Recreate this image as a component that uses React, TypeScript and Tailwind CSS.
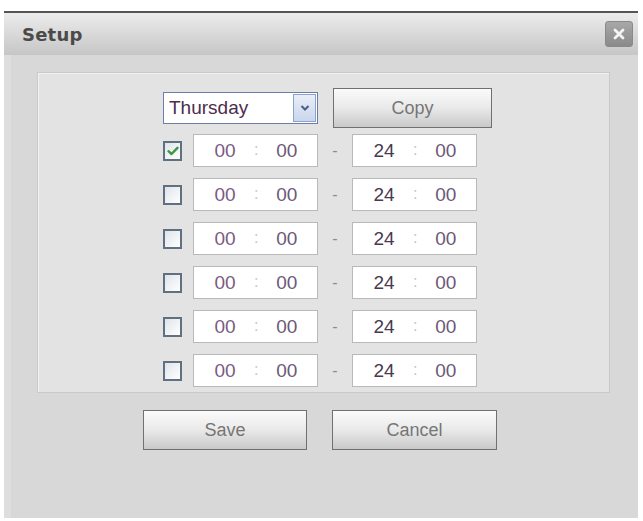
import React from 'react';

const rows = [true, false, false, false, false, false];

function Checkbox({ checked }: { checked: boolean }) {
  return (
    <div className="w-[19px] h-[20px] border-2 border-[#5f7080] bg-gradient-to-br from-[#dfe4ea] to-[#ffffff] flex items-center justify-center">
      {checked && (
        <svg width="12" height="10" viewBox="0 0 12 10">
          <path d="M1.5 5.2 L4.5 8 L10.5 1.8" fill="none" stroke="#3c9a3c" strokeWidth="2.4" strokeLinecap="round" strokeLinejoin="round" />
        </svg>
      )}
    </div>
  );
}

function TimeBox({ h, m, hourColor }: { h: string; m: string; hourColor: string }) {
  return (
    <div className="w-[125px] h-[33px] bg-white border border-[#b9b9b9] flex items-center text-[19px] leading-none">
      <span className={`w-[60px] pl-[2px] text-center ${hourColor}`}>{h}</span>
      <span className="text-[#c4c4c4] text-[16px] -mt-[2px]">:</span>
      <span className="flex-1 text-center text-[#6c5878] pr-[2px]">{m}</span>
    </div>
  );
}

function GrayButton({ label, className }: { label: string; className: string }) {
  return (
    <button className={`h-[40px] border-[1.5px] border-[#707070] bg-gradient-to-b from-[#fbfbfb] via-[#e9e9e9] to-[#c9c9c9] text-[18px] text-[#767676] ${className}`}>
      {label}
    </button>
  );
}

export default function App() {
  return (
    <div className="w-[643px] h-[521px] bg-white pt-[11px] pl-[4px]" style={{ fontFamily: '"Liberation Sans", Arial, sans-serif' }}>
      <div className="w-[634px] h-[507px] flex flex-col border-t-2 border-[#555]">
        {/* title bar */}
        <div className="h-[42px] bg-gradient-to-b from-[#ececec] to-[#c6c6c6] flex items-center justify-between pl-[18px] pr-[5px]">
          <span className="text-[18px] font-bold text-[#4a4a4a] tracking-[0.2px]" style={{ fontFamily: '"DejaVu Sans", Verdana, sans-serif' }}>
            Setup
          </span>
          <div className="w-[28px] h-[26px] rounded-[3px] border border-[#8a8a8a] bg-gradient-to-b from-[#a8a8a8] to-[#8a8a8a] flex items-center justify-center">
            <svg width="14" height="14" viewBox="0 0 14 14">
              <path d="M3 3 L11 11 M11 3 L3 11" stroke="#f4f4f4" strokeWidth="2.8" strokeLinecap="round" />
            </svg>
          </div>
        </div>

        {/* body */}
        <div className="flex-1 bg-[#d8d8d8] border-l-[7px] border-[#dedede] pt-[17px] pl-[26px]">
          <div className="w-[573px] h-[321px] bg-[#e3e3e3] border border-[#c9c9c9] shadow-[inset_1px_1px_0_#f2f2f2] pl-[125px] pt-[15px]">
            <div className="flex items-center h-[40px]">
              <div className="w-[155px] h-[32px] border-[1.5px] border-[#6d7cab] bg-white flex items-center justify-between pl-[5px] pr-[1px]">
                <span className="text-[19px] text-[#4d2d4d]">Thursday</span>
                <div className="w-[23px] h-[28px] bg-gradient-to-b from-[#e9eef8] to-[#c9d6ec] border border-[#8ea3c9] flex items-center justify-center">
                  <svg width="10" height="8" viewBox="0 0 10 8">
                    <path d="M1.5 2 L5 5.5 L8.5 2" fill="none" stroke="#4a5f88" strokeWidth="2" />
                  </svg>
                </div>
              </div>
              <GrayButton label="Copy" className="w-[159px] ml-[15px]" />
            </div>

            <div className="flex flex-col gap-[11px] mt-[6px]">
              {rows.map((checked, i) => (
                <div key={i} className="flex items-center">
                  <Checkbox checked={checked} />
                  <div className="ml-[11px]">
                    <TimeBox h="00" m="00" hourColor="text-[#7a5a82]" />
                  </div>
                  <span className="w-[34px] text-center text-[#8a8a8a] text-[16px]">-</span>
                  <TimeBox h="24" m="00" hourColor="text-[#4a3a4e]" />
                </div>
              ))}
            </div>
          </div>

          <div className="flex mt-[17px] pl-[106px] gap-[25px]">
            <GrayButton label="Save" className="w-[164px]" />
            <GrayButton label="Cancel" className="w-[165px]" />
          </div>
        </div>
      </div>
    </div>
  );
}
